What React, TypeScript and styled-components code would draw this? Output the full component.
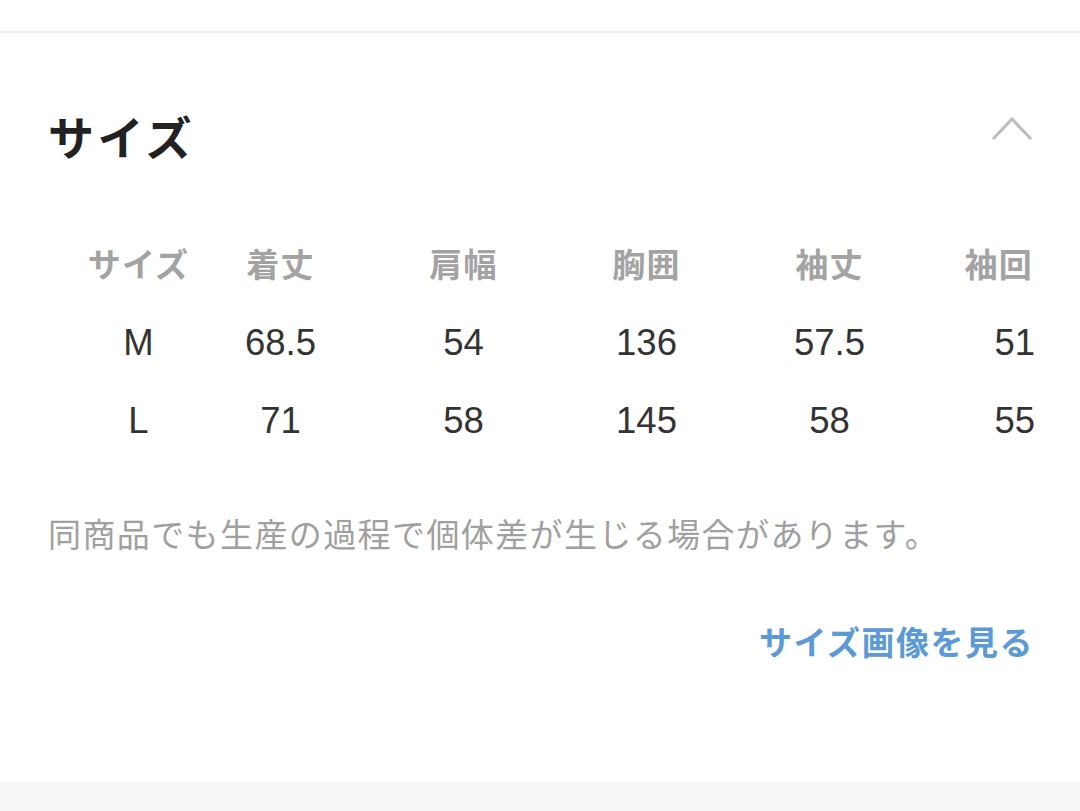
import styled, { createGlobalStyle } from "styled-components";

const GlobalStyle = createGlobalStyle`
  html, body {
    margin: 0;
    padding: 0;
    background: #f6f6f6;
  }
  body {
    font-family: "Liberation Sans", "Noto Sans CJK JP", sans-serif;
    -webkit-font-smoothing: antialiased;
  }
`;

const TopBar = styled.div`
  height: 31px;
  background: #ffffff;
  border-bottom: 2px solid #ededed;
`;

const Card = styled.section`
  background: #ffffff;
  padding: 82px 48px 118px;
`;

const Header = styled.div`
  display: flex;
  align-items: center;
  justify-content: space-between;
`;

const Title = styled.h2`
  margin: 0;
  font-size: 46px;
  line-height: 48px;
  font-weight: 700;
  color: #222222;
  letter-spacing: 3.5px;
`;

const Chevron = styled.svg`
  width: 40px;
  height: 24px;
  margin-top: -22px;
`;

const Table = styled.div`
  display: grid;
  grid-template-columns: 101px 183px 183px 183px 183px 1fr;
  margin: 64px 0 0 40px;
`;

const Cell = styled.div<{ $head?: boolean; $last?: boolean }>`
  box-sizing: border-box;
  height: 77.5px;
  display: flex;
  align-items: center;
  white-space: nowrap;
  justify-content: ${(p) => (p.$last ? "flex-end" : "center")};
  padding-bottom: ${(p) => (p.$head ? "6px" : "0")};
  font-size: ${(p) => (p.$head ? "33px" : "36.5px")};
  font-weight: ${(p) => (p.$head ? 700 : 400)};
  letter-spacing: ${(p) => (p.$head ? "1.2px" : "0")};
  color: ${(p) => (p.$head ? "#a3a3a3" : "#333333")};
  ${(p) => (p.$last && !p.$head ? "margin-right: -3px;" : "")}
  ${(p) => (p.$last && p.$head ? "margin-right: -1px;" : "")}
`;

const Note = styled.p`
  margin: 56px 0 0;
  font-size: 33px;
  line-height: 40px;
  color: #a0a0a0;
  letter-spacing: 1.4px;
`;

const LinkRow = styled.div`
  display: flex;
  justify-content: flex-end;
  margin-top: 68px;
`;

const SizeLink = styled.a`
  font-size: 33px;
  line-height: 40px;
  font-weight: 700;
  color: #5b9ad6;
  text-decoration: none;
  letter-spacing: 1.5px;
  margin-right: -2px;
`;

const headers = ["サイズ", "着丈", "肩幅", "胸囲", "袖丈", "袖回"];
const rows = [
  ["M", "68.5", "54", "136", "57.5", "51"],
  ["L", "71", "58", "145", "58", "55"],
];

export default function App() {
  return (
    <>
      <GlobalStyle />
      <TopBar />
      <Card>
        <Header>
          <Title>サイズ</Title>
          <Chevron viewBox="0 0 40 24" fill="none">
            <path d="M2 22 L20 3 L38 22" stroke="#bdbdbd" strokeWidth="3.2" strokeLinecap="round" strokeLinejoin="round" />
          </Chevron>
        </Header>
        <Table>
          {headers.map((h, i) => (
            <Cell key={h} $head $last={i === headers.length - 1}>
              {h}
            </Cell>
          ))}
          {rows.map((r) =>
            r.map((v, i) => (
              <Cell key={r[0] + i} $last={i === r.length - 1}>
                {v}
              </Cell>
            ))
          )}
        </Table>
        <Note>同商品でも生産の過程で個体差が生じる場合があります。</Note>
        <LinkRow>
          <SizeLink href="#">サイズ画像を見る</SizeLink>
        </LinkRow>
      </Card>
    </>
  );
}
